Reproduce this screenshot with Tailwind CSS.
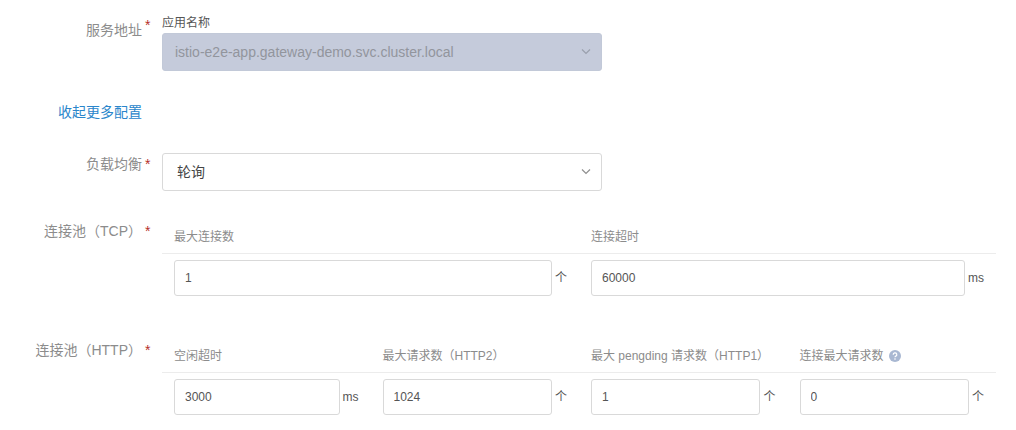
<!DOCTYPE html>
<html lang="zh-CN">
<head>
    <meta charset="UTF-8">
    <meta name="viewport" content="width=device-width, initial-scale=1.0">
    <title>服务配置</title>
    <script src="https://cdn.jsdelivr.net/npm/@tailwindcss/browser@4"></script>
</head>
<body class="bg-white font-['Liberation_Sans','Noto_Sans_CJK_SC',sans-serif] text-xs leading-5 text-[#555555]">
    <form class="pt-3 pr-5 pb-3">
        <!-- 服务地址 -->
        <div class="flex">
            <div class="flex w-[162px] shrink-0 pt-2">
                <label for="service" class="w-[142px] text-right text-sm text-[#8c8c8c]">服务地址</label>
                <span class="pl-[3px] text-sm leading-2.5 text-[#b5302a]">*</span>
            </div>
            <div class="w-full max-w-[440px]">
                <p class="pt-px">应用名称</p>
                <div class="relative">
                    <select id="service" disabled class="h-[38px] w-full appearance-none rounded-[3px] border border-[#c2c9d8] bg-[#c5cbdb] px-3 text-sm text-[#92959d] opacity-100">
                        <option>istio-e2e-app.gateway-demo.svc.cluster.local</option>
                    </select>
                    <svg class="pointer-events-none absolute top-3.5 right-[11px] h-2.5 w-2.5" viewBox="0 0 10 10" fill="none" stroke="#9aa0ad" stroke-width="1.2"><path d="M1 2.5l4 4 4-4"/></svg>
                </div>
            </div>
        </div>

        <div class="mt-[31px] w-[142px] text-right text-sm leading-5">
            <a href="#" class="text-[#2a86cb]">收起更多配置</a>
        </div>

        <!-- 负载均衡 -->
        <div class="mt-[31px] flex">
            <div class="flex w-[162px] shrink-0 pt-px">
                <label for="balance" class="w-[142px] text-right text-sm text-[#8c8c8c]">负载均衡</label>
                <span class="pl-[3px] text-sm leading-5 text-[#b5302a]">*</span>
            </div>
            <div class="relative w-full max-w-[440px]">
                <select id="balance" class="block h-[38px] w-full appearance-none rounded-[3px] border border-[#d9d9d9] bg-white px-3.5 text-sm text-[#444444]">
                    <option>轮询</option>
                </select>
                <svg class="pointer-events-none absolute top-3.5 right-[11px] h-2.5 w-2.5" viewBox="0 0 10 10" fill="none" stroke="#8f8f8f" stroke-width="1.2"><path d="M1 2.5l4 4 4-4"/></svg>
            </div>
        </div>

        <!-- 连接池 TCP -->
        <div class="mt-[30px] flex">
            <div class="flex w-[162px] shrink-0">
                <span class="w-[142px] text-right text-sm text-[#8c8c8c]">连接池（TCP）</span>
                <span class="pl-[3px] text-sm leading-5 text-[#b5302a]">*</span>
            </div>
            <table class="w-full table-fixed">
                <thead>
                    <tr class="border-b border-[#ececec] text-left text-[#8c8c8c]">
                        <th class="px-3 pt-1.5 pb-1.5 font-normal"><label for="tcp-max">最大连接数</label></th>
                        <th class="px-3 pt-1.5 pb-1.5 font-normal"><label for="tcp-timeout">连接超时</label></th>
                    </tr>
                </thead>
                <tbody>
                    <tr>
                        <td class="px-3 pt-1.5">
                            <div class="flex items-center gap-[3px]">
                                <input id="tcp-max" type="text" value="1" class="h-9 w-full min-w-0 rounded-[3px] border border-[#d9d9d9] px-2.5">
                                <span>个</span>
                            </div>
                        </td>
                        <td class="px-3 pt-1.5">
                            <div class="flex items-center gap-[3px]">
                                <input id="tcp-timeout" type="text" value="60000" class="h-9 w-full min-w-0 rounded-[3px] border border-[#d9d9d9] px-2.5">
                                <span>ms</span>
                            </div>
                        </td>
                    </tr>
                </tbody>
            </table>
        </div>

        <!-- 连接池 HTTP -->
        <div class="mt-11 flex">
            <div class="flex w-[162px] shrink-0">
                <span class="w-[142px] text-right text-sm text-[#8c8c8c]">连接池（HTTP）</span>
                <span class="pl-[3px] text-sm leading-5 text-[#b5302a]">*</span>
            </div>
            <table class="w-full table-fixed">
                <thead>
                    <tr class="border-b border-[#ececec] text-left whitespace-nowrap text-[#8c8c8c]">
                        <th class="px-3 pt-1.5 pb-1.5 font-normal"><label for="http-idle">空闲超时</label></th>
                        <th class="px-3 pt-1.5 pb-1.5 font-normal"><label for="http2-max">最大请求数（HTTP2）</label></th>
                        <th class="px-3 pt-1.5 pb-1.5 font-normal"><label for="http1-pending">最大 pengding 请求数（HTTP1）</label></th>
                        <th class="px-3 pt-1.5 pb-1.5 font-normal">
                            <div class="flex items-center gap-[5px]">
                                <label for="conn-max">连接最大请求数</label>
                                <svg class="h-3 w-3" viewBox="0 0 12 12" fill="none"><circle cx="6" cy="6" r="6" fill="#a9b8d2"/><path d="M4.2 4.7a1.8 1.7 0 1 1 2.7 1.4c-.6.4-.9.6-.9 1.2" stroke="#fff" stroke-width="1.2"/><circle cx="6" cy="9" r=".8" fill="#fff"/></svg>
                            </div>
                        </th>
                    </tr>
                </thead>
                <tbody>
                    <tr>
                        <td class="px-3 pt-1.5">
                            <div class="flex items-center gap-[3px]">
                                <input id="http-idle" type="text" value="3000" class="h-9 w-full min-w-0 rounded-[3px] border border-[#d9d9d9] px-2.5">
                                <span>ms</span>
                            </div>
                        </td>
                        <td class="px-3 pt-1.5">
                            <div class="flex items-center gap-[3px]">
                                <input id="http2-max" type="text" value="1024" class="h-9 w-full min-w-0 rounded-[3px] border border-[#d9d9d9] px-2.5">
                                <span>个</span>
                            </div>
                        </td>
                        <td class="px-3 pt-1.5">
                            <div class="flex items-center gap-[3px]">
                                <input id="http1-pending" type="text" value="1" class="h-9 w-full min-w-0 rounded-[3px] border border-[#d9d9d9] px-2.5">
                                <span>个</span>
                            </div>
                        </td>
                        <td class="px-3 pt-1.5">
                            <div class="flex items-center gap-[3px]">
                                <input id="conn-max" type="text" value="0" class="h-9 w-full min-w-0 rounded-[3px] border border-[#d9d9d9] px-2.5">
                                <span>个</span>
                            </div>
                        </td>
                    </tr>
                </tbody>
            </table>
        </div>
    </form>
</body>
</html>
